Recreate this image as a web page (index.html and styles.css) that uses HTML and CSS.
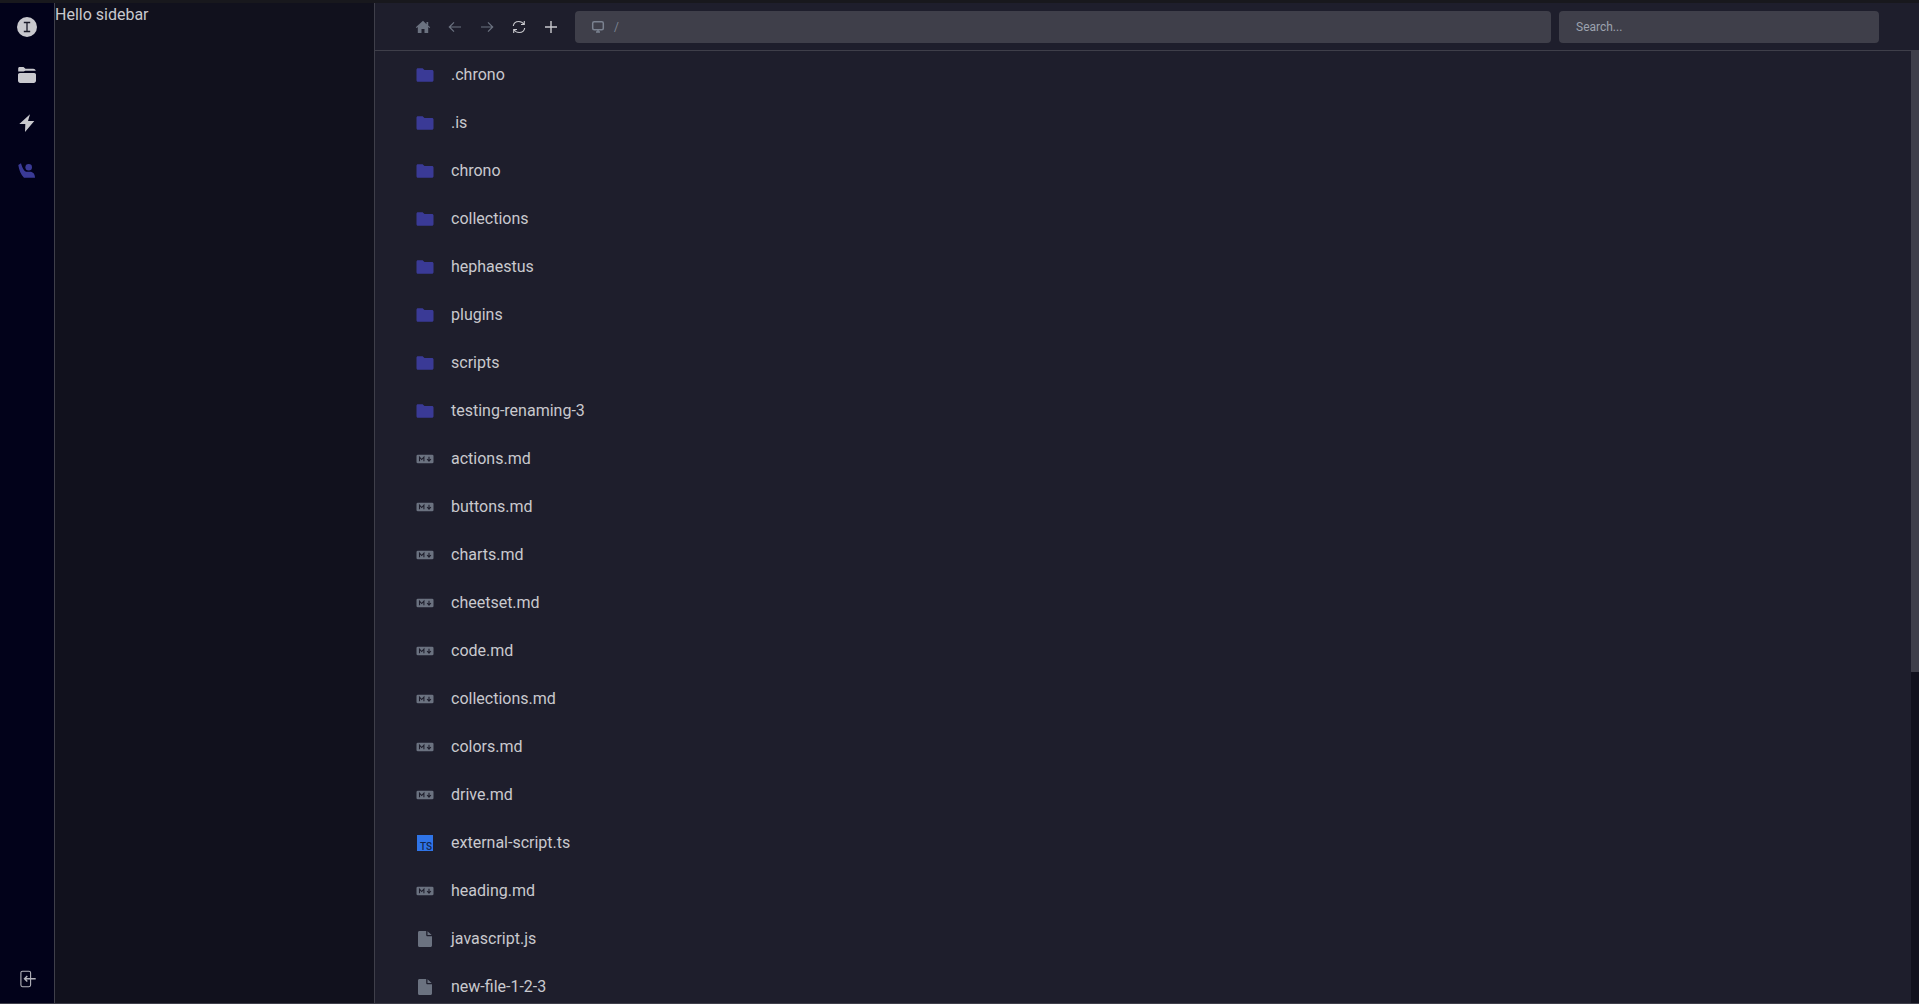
FILE: index.html
```html
<!DOCTYPE html>
<html lang="en">
<head>
  <meta charset="UTF-8" />
  <meta name="viewport" content="width=device-width, initial-scale=1.0"/>
  <title>Files</title>
  <link rel="stylesheet" href="styles.css">
</head>
<body>
  <svg class="defs" width="0" height="0">
    <symbol id="i-folder" viewBox="0 0 20 20">
      <path d="M2.900 3.200h4.700l1.900 1.900h7.500c.9 0 1.500.6 1.500 1.500v8.700c0 .9-.6 1.500-1.500 1.500H2.900c-.9 0-1.400-.6-1.400-1.500V4.700c0-.9.500-1.500 1.400-1.500z"/>
    </symbol>
    <symbol id="i-md" viewBox="0 0 20 20">
      <rect x="1.500" y="5.700" width="17" height="8.600" rx="1.300"/>
      <path d="M4.500 12.300V8.100l2.200 2.400 2.200-2.400v4.200M14 7.800v4M12.100 10l1.900 2.100 1.900-2.100" fill="none" stroke="#1e1e2c" stroke-width="1.100"/>
    </symbol>
    <symbol id="i-file" viewBox="0 0 20 20">
      <path d="M4.500 2h6.700v4c0 .7.600 1.300 1.300 1.300H17v9.200c0 .9-.7 1.500-1.500 1.500h-11c-.9 0-1.500-.7-1.500-1.500v-13C3 2.700 3.600 2 4.500 2zM12.500 2.300L16.700 6h-4.200z"/>
    </symbol>
  </svg>

  <div class="topbar"></div>

  <div class="app">
    <nav class="rail">
      <svg class="rail-icon" viewBox="0 0 20 20"><circle cx="10" cy="10" r="10" fill="#c9c9ce"/><path d="M6.800 5.500h6.400M6.800 14.500h6.400M10 5.500v9" fill="none" stroke="#1a1a28" stroke-width="1.300"/></svg>
      <svg class="rail-icon" viewBox="0 0 20 20"><path d="M1.200 3.500c0-.8.600-1.400 1.400-1.400h3.900l2 1.700h7.700c1.200 0 2.300.7 2.600 2H8.300l-1.600.7H1.200z"/><path d="M2.800 7.900h14.400c1 0 1.800.8 1.800 1.800v6.100c0 1.200-1 2.200-2.200 2.200H3.200C2 18 1 17 1 15.800V9.700c0-1 .8-1.800 1.800-1.800z"/></svg>
      <svg class="rail-icon" viewBox="0 0 20 20"><path d="M13 1.300L2.300 11h6L8 19l9.300-11H11z"/></svg>
      <svg class="rail-icon rail-active" viewBox="0 0 20 20"><circle cx="11.700" cy="6.300" r="3.300"/><path d="M1.300 4L4 2.300C5 6 7 10.200 9 10.700h4c3 0 5 2.300 5 6H7C4 14 2 9 1.300 4z"/></svg>
      <svg class="rail-icon rail-logout" viewBox="0 0 20 20" fill="none" stroke="#b4b4bc" stroke-width="1.100"><path d="M5.500 2.200h6.500c.9 0 1.600.7 1.600 1.600v12.300c0 .9-.7 1.600-1.600 1.600H5.500c-.9 0-1.600-.7-1.600-1.600V3.800c0-.9.700-1.600 1.600-1.600z"/><path d="M18.700 9.800H7.500M10.300 7l-2.800 2.800 2.800 2.800" stroke-width="1.400"/></svg>
    </nav>

    <aside class="sidebar">Hello sidebar</aside>

    <main class="main">
      <header class="toolbar">
        <div class="tools">
          <svg class="tool" viewBox="0 0 16 16"><path fill="#6b7280" d="M8 1.800L.8 8.200l.8.900 1.200-1V14h3.700v-4h3v4h3.700V8.100l1.200 1 .8-.9-2-1.800V3h-1.700v2.300z"/></svg>
          <svg class="tool dim" viewBox="0 0 16 16"><path d="M14 8H2.500M7 3.300L2.300 8 7 12.700"/></svg>
          <svg class="tool dim" viewBox="0 0 16 16"><path d="M2 8h11.500M9 3.300L13.700 8 9 12.700"/></svg>
          <svg class="tool line" viewBox="0 0 16 16"><path d="M2.300 7C2.700 4 5 2.500 7.800 2.500c2.300 0 4 1 5.200 2.800M13.300 2v3.500H10M13.700 9c-.4 3-2.700 4.500-5.500 4.500-2.300 0-4-1-5.200-2.800M2.700 14v-3.500H6"/></svg>
          <svg class="tool line wide" viewBox="0 0 16 16"><path d="M8 2v12M2 8h12"/></svg>
        </div>
        <div class="address">
          <svg class="monitor" viewBox="0 0 16 16"><rect x="2.700" y="2.700" width="10.600" height="8" rx="1.500"/><path d="M6 13h4M8 11v2"/></svg>
          <span class="crumb">/</span>
        </div>
        <div class="search">Search...</div>
      </header>

      <div class="list">
        <ul class="files">
          <li><svg class="ico folder"><use href="#i-folder"/></svg>.chrono</li>
          <li><svg class="ico folder"><use href="#i-folder"/></svg>.is</li>
          <li><svg class="ico folder"><use href="#i-folder"/></svg>chrono</li>
          <li><svg class="ico folder"><use href="#i-folder"/></svg>collections</li>
          <li><svg class="ico folder"><use href="#i-folder"/></svg>hephaestus</li>
          <li><svg class="ico folder"><use href="#i-folder"/></svg>plugins</li>
          <li><svg class="ico folder"><use href="#i-folder"/></svg>scripts</li>
          <li><svg class="ico folder"><use href="#i-folder"/></svg>testing-renaming-3</li>
          <li><svg class="ico grey"><use href="#i-md"/></svg>actions.md</li>
          <li><svg class="ico grey"><use href="#i-md"/></svg>buttons.md</li>
          <li><svg class="ico grey"><use href="#i-md"/></svg>charts.md</li>
          <li><svg class="ico grey"><use href="#i-md"/></svg>cheetset.md</li>
          <li><svg class="ico grey"><use href="#i-md"/></svg>code.md</li>
          <li><svg class="ico grey"><use href="#i-md"/></svg>collections.md</li>
          <li><svg class="ico grey"><use href="#i-md"/></svg>colors.md</li>
          <li><svg class="ico grey"><use href="#i-md"/></svg>drive.md</li>
          <li><span class="ts"><span>TS</span></span>external-script.ts</li>
          <li><svg class="ico grey"><use href="#i-md"/></svg>heading.md</li>
          <li><svg class="ico grey"><use href="#i-file"/></svg>javascript.js</li>
          <li><svg class="ico grey"><use href="#i-file"/></svg>new-file-1-2-3</li>
        </ul>
        <div class="scrollbar"><div class="thumb"></div></div>
      </div>
    </main>
  </div>

  <div class="bottombar"></div>
</body>
</html>
```

FILE: styles.css
```css
* {
  box-sizing: border-box;
}

html, body {
  height: 100%;
}

body {
  margin: 0;
  display: flex;
  flex-direction: column;
  overflow: hidden;
  background: #1e1e2c;
  color: #c9c9ce;
  font-family: Roboto, "Liberation Sans", sans-serif;
  font-size: 16px;
}

.defs {
  position: absolute;
}

.topbar {
  height: 3px;
  flex: none;
  background: #18181d;
}

.bottombar {
  height: 1px;
  flex: none;
  background: #3f3f4a;
}

.app {
  flex: 1;
  display: flex;
  min-height: 0;
}

/* icon rail */
.rail {
  width: 55px;
  flex: none;
  display: flex;
  flex-direction: column;
  align-items: center;
  gap: 28px;
  padding: 14px 0 14px;
  background: #02021a;
  border-right: 1px solid #3f3f4a;
}

.rail-icon {
  width: 20px;
  height: 20px;
  flex: none;
  fill: #c9c9ce;
}

.rail-active {
  fill: #3a3a96;
}

.rail-logout {
  fill: none;
  margin-top: auto;
}

.sidebar {
  width: 320px;
  flex: none;
  padding: 2px 0 0;
  line-height: 19px;
  background: #11111d;
  border-right: 1px solid #3f3f4a;
}

/* main */
.main {
  flex: 1;
  min-width: 0;
  display: flex;
  flex-direction: column;
}

.toolbar {
  height: 48px;
  flex: none;
  display: flex;
  align-items: center;
  padding: 0 40px;
  border-bottom: 1px solid #3f3f4a;
}

.tools {
  display: flex;
  align-items: center;
  gap: 16px;
  margin-right: 16px;
}

.tool {
  width: 16px;
  height: 16px;
  fill: none;
}

.dim {
  stroke: #6b7280;
  stroke-width: 1.2;
}

.line {
  stroke: #c9c9ce;
  stroke-width: 1.1;
}

.wide {
  stroke-width: 1.4;
}

.address {
  flex: 1;
  height: 32px;
  display: flex;
  align-items: center;
  gap: 8px;
  padding-left: 15px;
  margin-right: 8px;
  background: #3f3f4a;
  border-radius: 4px;
}

.monitor {
  width: 16px;
  height: 16px;
  fill: none;
  stroke: #7b8290;
  stroke-width: 1.5;
}

.crumb {
  font-size: 12px;
  color: #7b8290;
}

.search {
  width: 320px;
  height: 32px;
  flex: none;
  display: flex;
  align-items: center;
  padding-left: 17px;
  font-size: 12px;
  color: #9ca3af;
  background: #3f3f4a;
  border-radius: 4px;
}

.list {
  flex: 1;
  min-height: 0;
  position: relative;
  overflow: hidden;
}

.scrollbar {
  position: absolute;
  top: 0;
  right: 0;
  bottom: 0;
  width: 8px;
  background: #11111d;
}

.thumb {
  height: 621px;
  background: #3f3f4a;
}

.files {
  list-style: none;
  margin: 0;
  padding: 0;
}

/* text sits a pixel above the icon centre */
.files li {
  height: 48px;
  display: flex;
  align-items: center;
  gap: 16px;
  padding: 0 0 2px 40px;
}

.ico, .ts {
  width: 20px;
  height: 20px;
  flex: none;
  margin-top: 2px;
}

.folder {
  fill: #3a3a96;
}

.grey {
  fill: #6b7280;
}

.ts {
  padding: 2px;
}

.ts span {
  display: flex;
  align-items: flex-end;
  justify-content: flex-end;
  width: 16px;
  height: 16px;
  padding-right: 1px;
  font-size: 10px;
  font-weight: 500;
  line-height: 9px;
  color: #14264d;
  background: #2f74e8;
}
```
